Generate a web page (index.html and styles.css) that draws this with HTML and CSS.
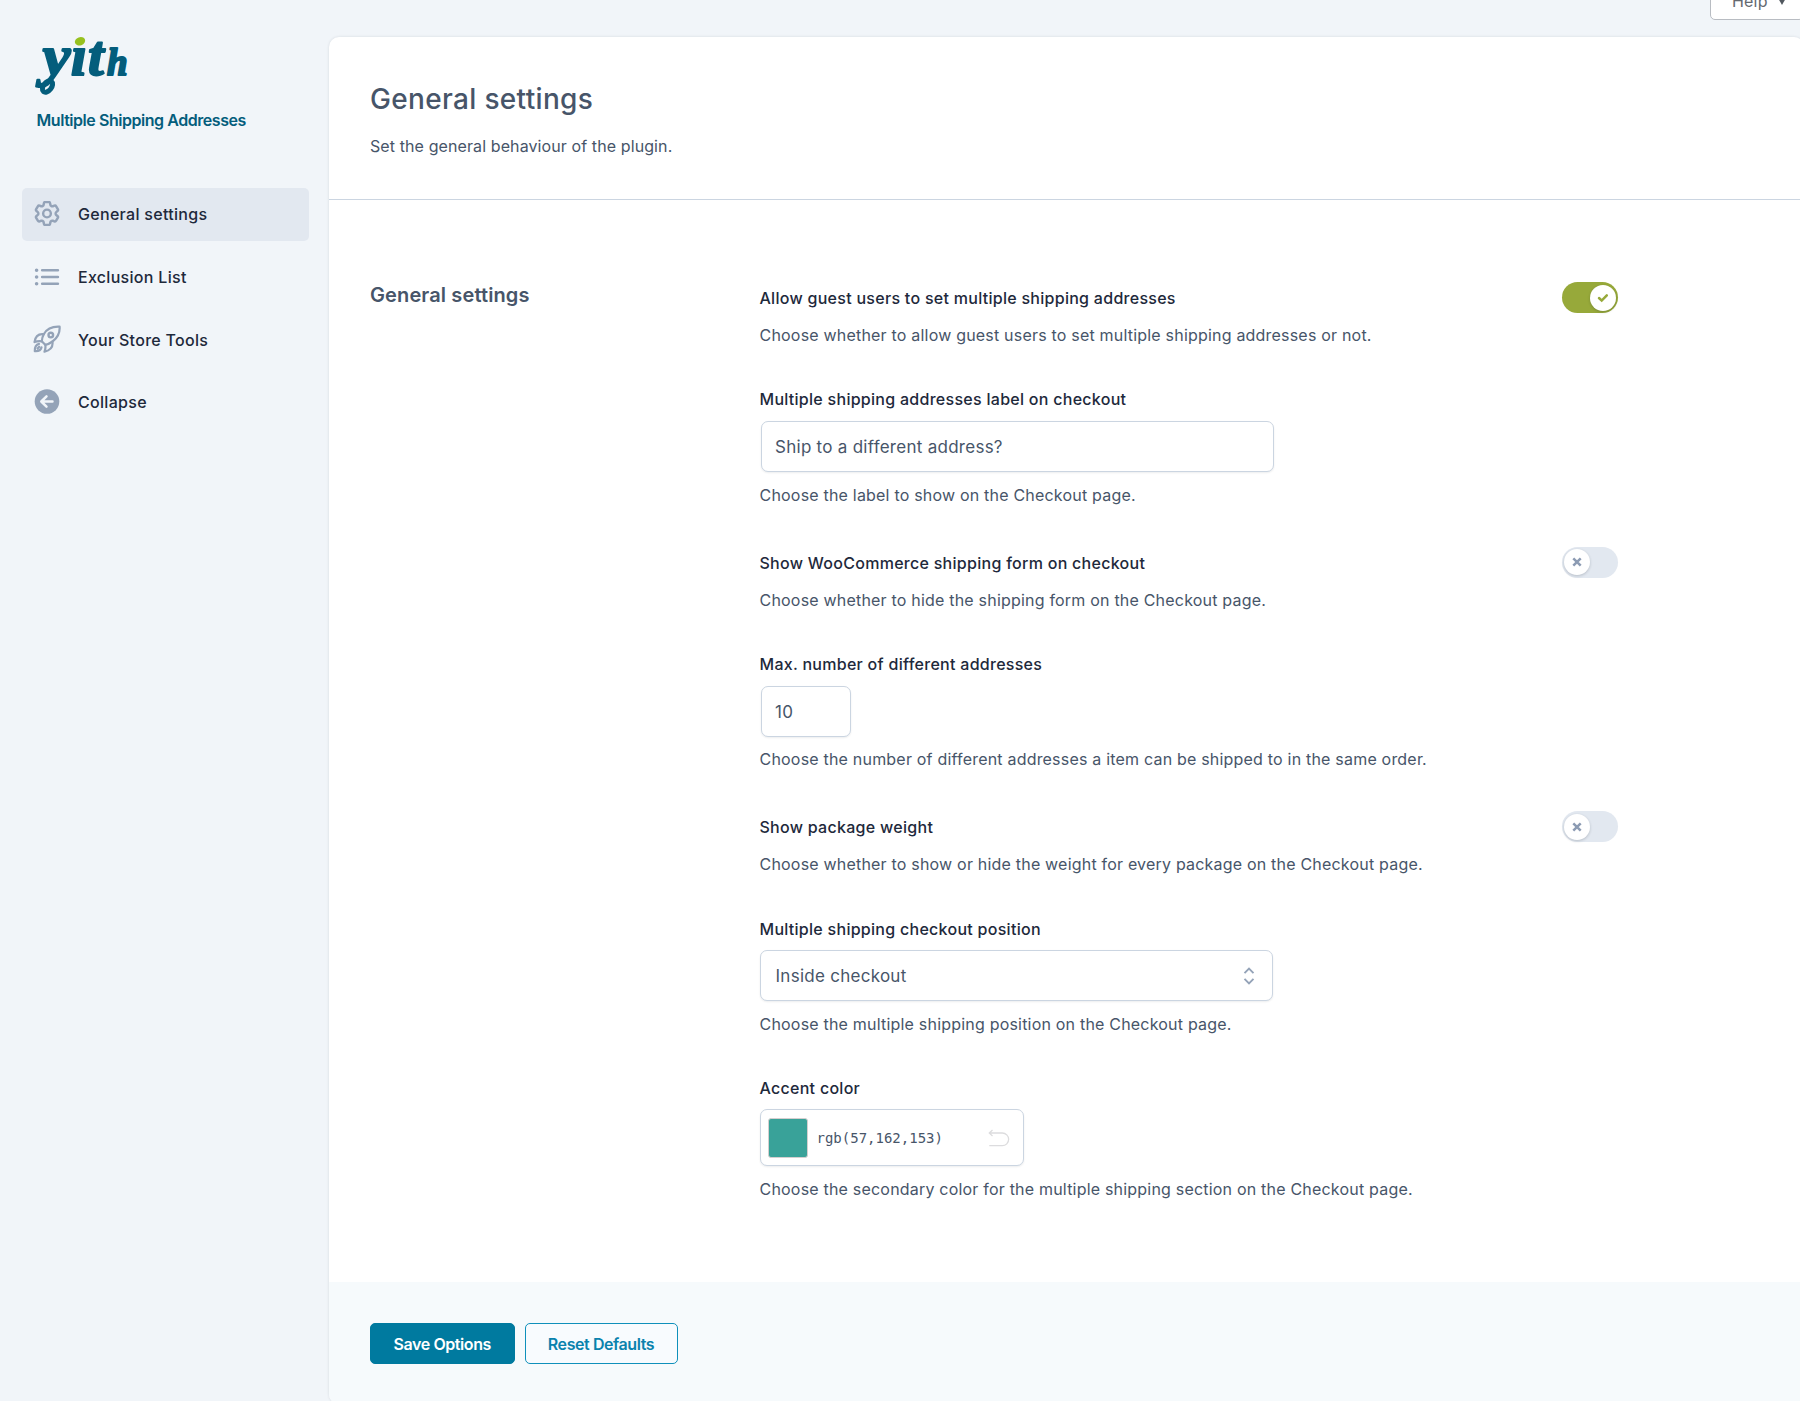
FILE: index.html
```
<!DOCTYPE html>
<html lang="en">

<head>
  <meta charset="UTF-8">
  <meta name="viewport" content="width=device-width, initial-scale=1.0">
  <title>Multiple Shipping Addresses - General settings</title>
  <link rel="stylesheet" href="styles.css">
</head>

<body>

  <aside class="sidebar">
    <div class="brand">
      <svg class="logo" width="94" height="66" viewBox="0 0 94 66" role="img" aria-label="yith">
        <text class="logo-text" y="40"><tspan class="big" x="5.500" textLength="28" lengthAdjust="spacingAndGlyphs">y</tspan><tspan class="big" x="34">ı</tspan><tspan class="big" x="51">t</tspan><tspan class="small" x="70">h</tspan></text>
        <ellipse class="tail" cx="10.500" cy="51.500" rx="4" ry="6.500" transform="rotate(38 10.500 51.500)"/>
        <ellipse cx="43" cy="6.300" rx="5.300" ry="4.100" transform="rotate(-20 43 6.300)" fill="#97c11f"/>
      </svg>
      <div class="brand-name">Multiple Shipping Addresses</div>
    </div>

    <nav class="menu">
      <a class="menu-item active">
        <svg width="25" height="25" viewBox="2.25 2.25 19.5 19.5" stroke-width="1.9">
          <path d="M9.594 3.94c.09-.542.56-.94 1.11-.94h2.593c.55 0 1.02.398 1.11.94l.213 1.281c.063.374.313.686.645.87.074.04.147.083.22.127.325.196.72.257 1.075.124l1.217-.456a1.125 1.125 0 0 1 1.37.49l1.296 2.247a1.125 1.125 0 0 1-.26 1.431l-1.003.827c-.293.241-.438.613-.43.992a7.723 7.723 0 0 1 0 .255c-.008.378.137.75.43.991l1.004.827c.424.35.534.955.26 1.43l-1.298 2.247a1.125 1.125 0 0 1-1.369.491l-1.217-.456c-.355-.133-.75-.072-1.076.124a6.47 6.47 0 0 1-.22.128c-.331.183-.581.495-.644.869l-.213 1.281c-.09.543-.56.94-1.11.94h-2.594c-.55 0-1.019-.398-1.11-.94l-.213-1.281c-.062-.374-.312-.686-.644-.87a6.52 6.52 0 0 1-.22-.127c-.325-.196-.72-.257-1.076-.124l-1.217.456a1.125 1.125 0 0 1-1.369-.49l-1.297-2.247a1.125 1.125 0 0 1 .26-1.431l1.004-.827c.292-.24.437-.613.43-.991a6.932 6.932 0 0 1 0-.255c.007-.38-.138-.751-.43-.992l-1.004-.827a1.125 1.125 0 0 1-.26-1.43l1.297-2.247a1.125 1.125 0 0 1 1.37-.491l1.216.456c.356.133.751.072 1.076-.124.072-.044.146-.086.22-.128.332-.183.582-.495.644-.869l.214-1.28Z"/>
          <circle cx="12" cy="12" r="3"/>
        </svg>
        <span>General settings</span>
      </a>
      <a class="menu-item">
        <svg width="26" height="20" viewBox="0 0 26 20" stroke-width="2.6">
          <path d="M8.200 3.200h15.700M8.200 10h15.700M8.200 16.800h15.700"/>
          <path d="M2.600 3.200h.01M2.600 10h.01M2.600 16.800h.01" stroke-width="3.6"/>
        </svg>
        <span>Exclusion List</span>
      </a>
      <a class="menu-item">
        <svg width="28" height="28" viewBox="0 0 28 28" stroke-width="2.2">
          <path d="M26.600 1.600C19 1.200 13.800 3.800 10.900 9c-1.400 2.500-2 4.900-2.100 7.200l3.400 3.600c2.600-.4 5-1.600 7.300-3.300C25 12.400 27.100 7.700 26.600 1.600Z"/>
          <path d="M10.700 9.200C5.600 8.600 2.300 11.500 1.500 17.100c2.300-.9 4.600-1.100 7.300-.8"/>
          <path d="M19.400 16.700c.8 5.100-2.200 8.700-7.900 10 .9-2.200 1.200-4.500.8-6.900"/>
          <path d="M6 18.900c-2.900.7-4.300 3-4.200 7.200 3.700.3 6-1 6.700-3.700M6.200 21.700l-1.600 1.800"/>
          <circle cx="17.800" cy="10.100" r="2.300" stroke-width="2.400"/>
        </svg>
        <span>Your Store Tools</span>
      </a>
      <a class="menu-item">
        <svg width="25" height="25" viewBox="0 0 25 25">
          <circle class="solid" cx="12.500" cy="12.500" r="12.300"/>
          <path d="M18 12.500H7.300M12 7.300l-5.200 5.200 5.200 5.200" stroke="#f1f5f9" stroke-width="2.500"/>
        </svg>
        <span>Collapse</span>
      </a>
    </nav>
  </aside>

  <main class="content">
    <div class="topbar">
      <button class="help">Help <span class="arrow"></span></button>
    </div>

    <div class="panel">
      <header class="panel-header">
        <h1>General settings</h1>
        <p>Set the general behaviour of the plugin.</p>
      </header>

      <section class="panel-body">
        <h2>General settings</h2>

        <div class="options">
          <div class="option toggle-option">
            <div>
              <label>Allow guest users to set multiple shipping addresses</label>
              <p>Choose whether to allow guest users to set multiple shipping addresses or not.</p>
            </div>
            <span class="toggle on">
              <span class="knob"><svg width="12" height="10" viewBox="0 0 12 10"><path d="M2 5l2.700 2.600L9.800 2.300"/></svg></span>
            </span>
          </div>

          <div class="option input-option">
            <label for="checkoutLabel">Multiple shipping addresses label on checkout</label>
            <input type="text" id="checkoutLabel" value="Ship to a different address?">
            <p>Choose the label to show on the Checkout page.</p>
          </div>

          <div class="option toggle-option">
            <div>
              <label>Show WooCommerce shipping form on checkout</label>
              <p>Choose whether to hide the shipping form on the Checkout page.</p>
            </div>
            <span class="toggle">
              <span class="knob"><svg width="10" height="10" viewBox="0 0 10 10"><path d="M1.300 1.300l7.400 7.400M8.700 1.300L1.300 8.700"/></svg></span>
            </span>
          </div>

          <div class="option input-option">
            <label for="maxAddresses">Max. number of different addresses</label>
            <input type="text" id="maxAddresses" class="number" value="10">
            <p>Choose the number of different addresses a item can be shipped to in the same order.</p>
          </div>

          <div class="option toggle-option">
            <div>
              <label>Show package weight</label>
              <p>Choose whether to show or hide the weight for every package on the Checkout page.</p>
            </div>
            <span class="toggle">
              <span class="knob"><svg width="10" height="10" viewBox="0 0 10 10"><path d="M1.300 1.300l7.400 7.400M8.700 1.300L1.300 8.700"/></svg></span>
            </span>
          </div>

          <div class="option">
            <label>Multiple shipping checkout position</label>
            <div class="select">
              <span>Inside checkout</span>
              <svg width="12" height="18" viewBox="0 0 12 18"><path d="M1.500 6.200L6 1.700l4.500 4.500M1.500 11.800L6 16.300l4.500-4.500"/></svg>
            </div>
            <p>Choose the multiple shipping position on the Checkout page.</p>
          </div>

          <div class="option">
            <label>Accent color</label>
            <div class="color-picker">
              <span class="swatch"></span>
              <span class="color-value">rgb(57,162,153)</span>
              <svg width="22" height="18" viewBox="0 0 22 18"><path d="M4.500 1L1.300 4l3.200 3M1.300 4h13a6.300 6.300 0 0 1 0 12.700H1.300"/></svg>
            </div>
            <p>Choose the secondary color for the multiple shipping section on the Checkout page.</p>
          </div>
        </div>
      </section>

      <footer class="panel-footer">
        <button class="btn primary">Save Options</button>
        <button class="btn secondary">Reset Defaults</button>
      </footer>
    </div>
  </main>

</body>

</html>
```
FILE: styles.css
```
* {
  box-sizing: border-box;
}

body {
  display: flex;
  height: 1401px;
  margin: 0;
  overflow: hidden;
  font-family: Inter, "Liberation Sans", sans-serif;
  font-size: 16px;
  line-height: 24px;
  color: #475569;
  background-color: #f1f5f9;
}

h1,
h2,
p {
  margin: 0;
}

/* Sidebar */
.sidebar {
  width: 329px;
  flex-shrink: 0;
  padding: 35px 20px 0 21.500px;
}

.brand {
  padding-left: 15px;
}

.logo {
  display: block;
  overflow: visible;
}

.logo-text {
  font-family: "Liberation Serif", serif;
  font-weight: bold;
  font-style: italic;
  fill: #045d7c;
  stroke: #045d7c;
  stroke-width: 2px;
  stroke-linejoin: round;
}

.logo-text .big {
  font-size: 57px;
}

.logo-text .small {
  font-size: 37px;
}

.logo .tail {
  fill: none;
  stroke: #045d7c;
  stroke-width: 5px;
}

.brand-name {
  margin-top: 7px;
  font-weight: 600;
  letter-spacing: -0.45px;
  color: #045d7c;
  white-space: nowrap;
}

.menu {
  display: flex;
  flex-direction: column;
  gap: 10px;
  margin-top: 56px;
}

.menu-item {
  display: flex;
  align-items: center;
  height: 52.700px;
  padding-left: 56.500px;
  font-weight: 500;
  letter-spacing: 0.3px;
  color: #1e293b;
  border-radius: 5px;
}

.menu-item.active {
  background-color: #e2e8f0;
}

.menu-item svg {
  width: 28px;
  margin: -1px 17px 0 -45px;
  flex-shrink: 0;
  fill: none;
  stroke: #94a3b8;
  stroke-linecap: round;
  stroke-linejoin: round;
}

.menu-item svg .solid {
  fill: #94a3b8;
  stroke: none;
}

/* Main area */
.content {
  flex: 1;
  margin-right: -4px;
}

.topbar {
  display: flex;
  justify-content: flex-end;
  height: 37px;
}

.help {
  display: flex;
  align-items: flex-end;
  gap: 10px;
  width: 94px;
  height: 40px;
  margin-top: -20px;
  padding: 0 0 6px 21px;
  font-family: inherit;
  font-size: 16px;
  line-height: 24px;
  letter-spacing: 0.2px;
  color: #646970;
  background-color: #fff;
  border: 1px solid #b8bcc2;
  border-radius: 5px;
}

.arrow {
  margin-bottom: 8px;
  border: 4px solid transparent;
  border-top: 7px solid #50575e;
  border-bottom: 0;
}

.panel {
  display: flex;
  flex-direction: column;
  height: 1367px;
  background-color: #fff;
  border-radius: 10px;
  box-shadow: 0 0 3px rgba(15, 23, 42, 0.12);
  overflow: hidden;
}

.panel-header {
  height: 163px;
  padding: 45px 41px 0;
  border-bottom: 1px solid #cbd5e1;
}

h1 {
  font-size: 28px;
  font-weight: 500;
  line-height: 34px;
  letter-spacing: 0.33px;
}

.panel-header p {
  margin-top: 17.500px;
  letter-spacing: 0.1px;
}

.panel-body {
  display: flex;
  flex: 1;
  padding: 86px 186px 0 41px;
}

h2 {
  width: 389.500px;
  margin-top: -3px;
  font-size: 20px;
  font-weight: 600;
  letter-spacing: 0.12px;
}

.options {
  flex: 1;
}

.option {
  margin-bottom: 40.400px;
}

.option label {
  display: block;
  font-weight: 500;
  letter-spacing: 0.28px;
  color: #1e293b;
}

.option p {
  margin-top: 10.300px;
  letter-spacing: 0.2px;
}

.toggle-option {
  display: flex;
  justify-content: space-between;
}

.toggle-option p {
  margin-top: 13px;
}

.input-option {
  margin-bottom: 44px;
}

input,
.select,
.color-picker {
  display: flex;
  align-items: center;
  width: 513px;
  height: 51px;
  margin-top: 10px;
  font-family: inherit;
  font-size: 17px;
  letter-spacing: 0.27px;
  color: #475569;
  background-color: #fff;
  border: 1px solid #cbd5e1;
  border-radius: 7px;
  box-shadow: 0 1px 2px rgba(15, 23, 42, 0.08);
}

input {
  margin-left: 1px;
  padding: 0 13.500px;
}

input.number {
  width: 90px;
}

.select,
.color-picker {
  margin-top: 9.500px;
}

.select {
  justify-content: space-between;
  padding: 0 17px 0 15px;
}

.select svg {
  fill: none;
  stroke: #94a3b8;
  stroke-width: 1.900;
}

/* Toggles */
.toggle {
  display: flex;
  width: 56px;
  height: 31px;
  margin-top: -4px;
  padding: 2.500px 2px;
  background-color: #e2e8f0;
  border-radius: 16px;
}

.toggle.on {
  justify-content: flex-end;
  background-color: #97a93a;
}

.knob {
  display: flex;
  align-items: center;
  justify-content: center;
  width: 26px;
  height: 26px;
  background-color: #fff;
  border-radius: 50%;
  box-shadow: 0 1px 3px rgba(15, 23, 42, 0.2);
}

.knob svg {
  fill: none;
  stroke: #8c9bb3;
  stroke-width: 2.500;
}

.on .knob svg {
  stroke: #97a93a;
  stroke-width: 2.500;
  stroke-linecap: round;
}

/* Color field */
.color-picker {
  width: 264px;
  height: 57px;
  padding: 0 13px 0 7px;
}

.swatch {
  width: 40px;
  height: 40px;
  background-color: #39a299;
  border: 1px solid #d5cfcf;
  border-radius: 3px;
}

.color-value {
  flex: 1;
  margin-left: 9px;
  font-family: "DejaVu Sans Mono", monospace;
  font-size: 14px;
  letter-spacing: 0;
}

.color-picker svg {
  fill: none;
  stroke: #dcdcde;
  stroke-width: 1.300;
}

/* Footer */
.panel-footer {
  display: flex;
  gap: 10px;
  height: 122px;
  padding: 41px;
  background-color: #f6fafc;
}

.btn {
  width: 144.500px;
  height: 41px;
  padding: 0;
  font-family: inherit;
  font-size: 16px;
  font-weight: 600;
  letter-spacing: -0.42px;
  border: 1px solid #007a9f;
  border-radius: 5px;
}

.primary {
  color: #fff;
  background-color: #007a9f;
}

.secondary {
  width: 153px;
  color: #0a82ad;
  background-color: #f8fbfe;
  border-color: #0f90bb;
}
```
